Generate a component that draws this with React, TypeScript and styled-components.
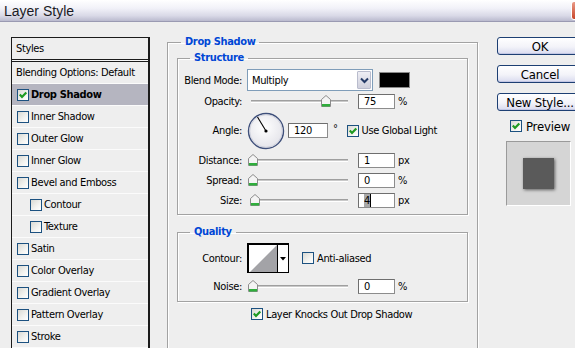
import React from "react";
import styled, { createGlobalStyle } from "styled-components";

const UI_FONT = `"DejaVu Sans Condensed", "Liberation Sans", Arial, sans-serif`;

const GlobalStyle = createGlobalStyle`
  html, body { margin: 0; padding: 0; background: #eeeeee; }
  body { font-family: ${UI_FONT}; font-size: 11px; letter-spacing: -0.35px; color: #000; }
  * { box-sizing: border-box; }
`;

const Dialog = styled.div`
  width: 575px;
  height: 348px;
  overflow: hidden;
  background: #eeeeee;
  display: flex;
  flex-direction: column;
`;

const TitleBar = styled.div`
  height: 22px;
  flex: none;
  display: flex;
  align-items: center;
  justify-content: space-between;
  padding-left: 4px;
  background: linear-gradient(to bottom, #ffffff 0%, #f1f1f8 40%, #d9d9e7 75%, #babace 100%);
  border-bottom: 1px solid #9a9ab2;
`;

const TitleText = styled.span`
  font-family: "Liberation Sans", Arial, sans-serif;
  font-size: 14px;
  letter-spacing: 0;
  color: #1b1b25;
`;

const CloseButton = styled.div`
  width: 21px;
  height: 19px;
  margin-right: -17px;
  border-radius: 3px;
  border: 1px solid #ffffff;
  background: linear-gradient(to bottom, #e99a86, #c8452a);
`;

const Body = styled.div`
  flex: 1;
  display: flex;
  align-items: flex-start;
  padding-left: 11px;
`;

/* ---------- left list ---------- */

const StyleList = styled.div`
  flex: none;
  width: 139px;
  height: 340px;
  margin-top: 15px;
  border: 1px solid #1b1b1b;
  border-right-width: 2px;
  display: flex;
  flex-direction: column;
`;

const ListHeader = styled.div`
  height: 21px;
  flex: none;
  display: flex;
  align-items: center;
  padding-left: 4px;
`;

const HeaderRule = styled.div`
  height: 3px;
  flex: none;
  border-top: 1px solid #1b1b1b;
  border-bottom: 1px solid #1b1b1b;
  background: #f6f6f6;
`;

const ListRow = styled.div<{ $selected?: boolean; $indent?: number }>`
  height: 22px;
  flex: none;
  display: flex;
  align-items: center;
  gap: 2px;
  padding-left: ${(p) => p.$indent ?? 5}px;
  border-bottom: 1px solid #fbfbfb;
  background: ${(p) => (p.$selected ? "#b5b5c0" : "transparent")};
  font-weight: ${(p) => (p.$selected ? "bold" : "normal")};
`;

/* ---------- checkbox ---------- */

const Box = styled.span`
  flex: none;
  width: 12px;
  height: 12px;
  border: 1px solid #1c5180;
  background: linear-gradient(135deg, #d9d9d3 0%, #f3f3f0 60%, #ffffff 100%);
  display: inline-flex;
  align-items: center;
  justify-content: center;
`;

const Check = ({ checked }: { checked?: boolean }) => (
  <Box>
    {checked && (
      <svg width="10" height="10" viewBox="0 0 10 10">
        <path d="M1.8 4.6 L4 7 L8.3 2.4" fill="none" stroke="#1f9a22" strokeWidth="2.2" />
      </svg>
    )}
  </Box>
);

/* ---------- middle ---------- */

const Main = styled.div`
  flex: none;
  margin-left: 17px;
  margin-top: 13px;
  width: 311px;
`;

const GroupBox = styled.fieldset<{ $pt?: number; $pb?: number; $px?: number; $mt?: number }>`
  margin: ${(p) => p.$mt ?? 0}px 0 0 0;
  min-width: 0;
  padding: ${(p) => p.$pt ?? 0}px ${(p) => p.$px ?? 0}px ${(p) => p.$pb ?? 0}px;
  border: 1px solid #a2a2a2;
  box-shadow: inset 1px 1px 0 #ffffff, 1px 1px 0 #ffffff;
`;

const GroupTitle = styled.legend<{ $ml: number }>`
  margin-left: ${(p) => p.$ml}px;
  padding: 0 4px;
  line-height: 14px;
  font-weight: bold;
  color: #0046d5;
`;

const Row = styled.div<{ $h: number; $mt?: number; $pl?: number }>`
  height: ${(p) => p.$h}px;
  margin-top: ${(p) => p.$mt ?? 0}px;
  padding-left: ${(p) => p.$pl ?? 0}px;
  display: flex;
  align-items: center;
`;

const Label = styled.span`
  flex: none;
  width: 64px;
  margin-right: 5px;
  text-align: right;
  white-space: nowrap;
`;

const Select = styled.div`
  flex: none;
  width: 126px;
  height: 22px;
  border: 1px solid #7f9db9;
  background: #ffffff;
  display: flex;
  align-items: stretch;
`;

const SelectText = styled.span`
  flex: 1;
  display: flex;
  align-items: center;
  padding-left: 4px;
`;

const SelectButton = styled.span`
  flex: none;
  width: 14px;
  margin: 1px;
  border: 1px solid #b9bccd;
  border-radius: 1px;
  background: linear-gradient(to bottom, #eeeef4, #cfd0dc);
  display: flex;
  align-items: center;
  justify-content: center;
`;

const Swatch = styled.span`
  flex: none;
  width: 31px;
  height: 16px;
  margin-left: 6px;
  border: 1px solid #8a8a8a;
  background: #000000;
`;

const SliderWrap = styled.div`
  flex: none;
  position: relative;
  width: 105px;
  height: 14px;
  margin-right: 6px;
  display: flex;
  align-items: center;
`;

const Track = styled.div`
  flex: 1;
  margin: 0 4px;
  height: 3px;
  border-top: 1px solid #9f9f9f;
  border-bottom: 1px solid #ffffff;
  background: #c9c9c9;
`;

const Thumb = styled.svg`
  position: absolute;
  top: 1px;
`;

const NumBox = styled.span<{ $w?: number }>`
  flex: none;
  width: ${(p) => p.$w ?? 37}px;
  height: 15px;
  border: 1px solid #8c8c8c;
  border-top-color: #6e6e6e;
  border-left-color: #6e6e6e;
  background: #ffffff;
  display: flex;
  align-items: center;
  padding-left: 5px;
`;

const Unit = styled.span`
  margin-left: 3px;
`;

const Selected = styled.span`
  background: #a8a8a8;
  border-right: 1px solid #000;
`;

const Degree = styled.span`
  margin-left: 5px;
  margin-right: 9px;
  align-self: flex-start;
  margin-top: 11px;
`;

const InlineCheck = styled.span<{ $ml?: number }>`
  display: flex;
  align-items: center;
  gap: 3px;
  margin-left: ${(p) => p.$ml ?? 0}px;
  white-space: nowrap;
`;

const ContourPicker = styled.div`
  flex: none;
  width: 42px;
  height: 30px;
  border: 1px solid #000;
  border-top-width: 2px;
  border-left-width: 2px;
  background: #ffffff;
  display: flex;
`;

const ContourImage = styled.span`
  flex: none;
  width: 29px;
  border-right: 1px solid #000;
  display: flex;
`;

const ContourArrow = styled.span`
  flex: 1;
  display: flex;
  align-items: center;
  justify-content: center;
`;

const Dial = styled.svg`
  flex: none;
  margin-right: 3px;
`;

/* ---------- right ---------- */

const Side = styled.div`
  flex: none;
  margin-left: 19px;
  margin-top: 15px;
  display: flex;
  flex-direction: column;
  font-size: 13px;
  letter-spacing: -0.2px;
`;

const Button = styled.div`
  width: 86px;
  height: 18px;
  margin-bottom: 10px;
  border: 1px solid #1d3f73;
  border-radius: 3px;
  background: linear-gradient(to bottom, #ffffff 0%, #f3f3f9 55%, #d9dbef 100%);
  box-shadow: inset 0 -1px 0 #c3c7e4;
  display: flex;
  align-items: center;
  justify-content: center;
`;

const PreviewRow = styled.div`
  height: 12px;
  margin-top: -1px;
  padding-left: 13px;
  display: flex;
  align-items: center;
  gap: 4px;
`;

const PreviewBox = styled.div`
  width: 65px;
  height: 65px;
  margin-top: 9px;
  margin-left: 9px;
  border: 1px solid #ffffff;
  border-top-color: #9a9a9a;
  border-left-color: #9a9a9a;
  background: #d5d5d5;
  display: flex;
  align-items: center;
  justify-content: center;
`;

const PreviewSquare = styled.div`
  width: 31px;
  height: 31px;
  background: #5a5a5a;
  box-shadow: 1px 1px 3px rgba(0, 0, 0, 0.55);
`;

/* ---------- pieces ---------- */

const Slider = ({ frac }: { frac: number }) => (
  <SliderWrap>
    <Track />
    <Thumb width="10" height="12" viewBox="0 0 10 12" style={{ left: 0.5 + frac * 98 }}>
      <path d="M0.5 11.5 V4.5 L5 0.5 L9.5 4.5 V11.5 Z" fill="#f4f4f4" stroke="#8c8c8c" />
      <rect x="1" y="9" width="8" height="2.5" fill="#2fae3c" />
    </Thumb>
  </SliderWrap>
);

const SliderRow = ({ label, value, unit, frac, sel }: { label: string; value: string; unit: string; frac: number; sel?: boolean }) => (
  <Row $h={20}>
    <Label>{label}</Label>
    <Slider frac={frac} />
    <NumBox>{sel ? <Selected>{value}</Selected> : value}</NumBox>
    <Unit>{unit}</Unit>
  </Row>
);

const styles: { name: string; checked?: boolean; selected?: boolean; indent?: number }[] = [
  { name: "Drop Shadow", checked: true, selected: true },
  { name: "Inner Shadow" },
  { name: "Outer Glow" },
  { name: "Inner Glow" },
  { name: "Bevel and Emboss" },
  { name: "Contour", indent: 18 },
  { name: "Texture", indent: 18 },
  { name: "Satin" },
  { name: "Color Overlay" },
  { name: "Gradient Overlay" },
  { name: "Pattern Overlay" },
  { name: "Stroke" },
];

export default function App() {
  return (
    <Dialog>
      <GlobalStyle />
      <TitleBar>
        <TitleText>Layer Style</TitleText>
        <CloseButton />
      </TitleBar>
      <Body>
        <StyleList>
          <ListHeader>Styles</ListHeader>
          <HeaderRule />
          <ListRow $indent={4}>Blending Options: Default</ListRow>
          {styles.map((s) => (
            <ListRow key={s.name} $selected={s.selected} $indent={s.indent}>
              <Check checked={s.checked} />
              <span>{s.name}</span>
            </ListRow>
          ))}
        </StyleList>

        <Main>
          <GroupBox $pt={2} $px={9} $pb={40}>
            <GroupTitle $ml={4}>Drop Shadow</GroupTitle>
            <GroupBox $pt={4} $pb={4}>
              <GroupTitle $ml={12}>Structure</GroupTitle>
              <Row $h={22}>
                <Label>Blend Mode:</Label>
                <Select>
                  <SelectText>Multiply</SelectText>
                  <SelectButton>
                    <svg width="9" height="7" viewBox="0 0 9 7">
                      <path d="M1 1.5 L4.5 5 L8 1.5" fill="none" stroke="#243a66" strokeWidth="2" />
                    </svg>
                  </SelectButton>
                </Select>
                <Swatch />
              </Row>
              <SliderRow label="Opacity:" value="75" unit="%" frac={0.75} />
              <Row $h={39}>
                <Label>Angle:</Label>
                <Dial width="38" height="38" viewBox="0 0 38 38">
                  <defs>
                    <radialGradient id="dialFill" cx="45%" cy="40%" r="60%">
                      <stop offset="0%" stopColor="#ffffff" />
                      <stop offset="100%" stopColor="#e4e4ea" />
                    </radialGradient>
                  </defs>
                  <circle cx="19" cy="19" r="17.5" fill="url(#dialFill)" stroke="#3e4f7a" strokeWidth="1.4" />
                  <circle cx="19" cy="19" r="16.3" fill="none" stroke="#c9cbd8" strokeWidth="0.8" />
                  <line x1="19" y1="19" x2="10.5" y2="5" stroke="#000" strokeWidth="1.1" />
                  <circle cx="19" cy="19" r="1.6" fill="#000" />
                </Dial>
                <NumBox $w={40}>120</NumBox>
                <Degree>°</Degree>
                <InlineCheck>
                  <Check checked />
                  <span>Use Global Light</span>
                </InlineCheck>
              </Row>
              <SliderRow label="Distance:" value="1" unit="px" frac={0} />
              <SliderRow label="Spread:" value="0" unit="%" frac={0} />
              <SliderRow label="Size:" value="4" unit="px" frac={0.03} sel />
            </GroupBox>

            <GroupBox $mt={10} $pt={4} $pb={5}>
              <GroupTitle $ml={12}>Quality</GroupTitle>
              <Row $h={30}>
                <Label>Contour:</Label>
                <ContourPicker>
                  <ContourImage>
                    <svg width="28" height="27" viewBox="0 0 28 27">
                      <polygon points="1,27 28,0 28,27" fill="#a3a3a7" />
                    </svg>
                  </ContourImage>
                  <ContourArrow>
                    <svg width="6" height="4" viewBox="0 0 6 4">
                      <polygon points="0,0 6,0 3,3.5" fill="#000" />
                    </svg>
                  </ContourArrow>
                </ContourPicker>
                <InlineCheck $ml={13}>
                  <Check />
                  <span>Anti-aliased</span>
                </InlineCheck>
              </Row>
              <Row $h={20} $mt={3}>
                <Label>Noise:</Label>
                <Slider frac={0} />
                <NumBox>0</NumBox>
                <Unit>%</Unit>
              </Row>
            </GroupBox>

            <Row $h={14} $mt={5} $pl={74}>
              <InlineCheck>
                <Check checked />
                <span>Layer Knocks Out Drop Shadow</span>
              </InlineCheck>
            </Row>
          </GroupBox>
        </Main>

        <Side>
          <Button>OK</Button>
          <Button>Cancel</Button>
          <Button>New Style...</Button>
          <PreviewRow>
            <Check checked />
            <span>Preview</span>
          </PreviewRow>
          <PreviewBox>
            <PreviewSquare />
          </PreviewBox>
        </Side>
      </Body>
    </Dialog>
  );
}
